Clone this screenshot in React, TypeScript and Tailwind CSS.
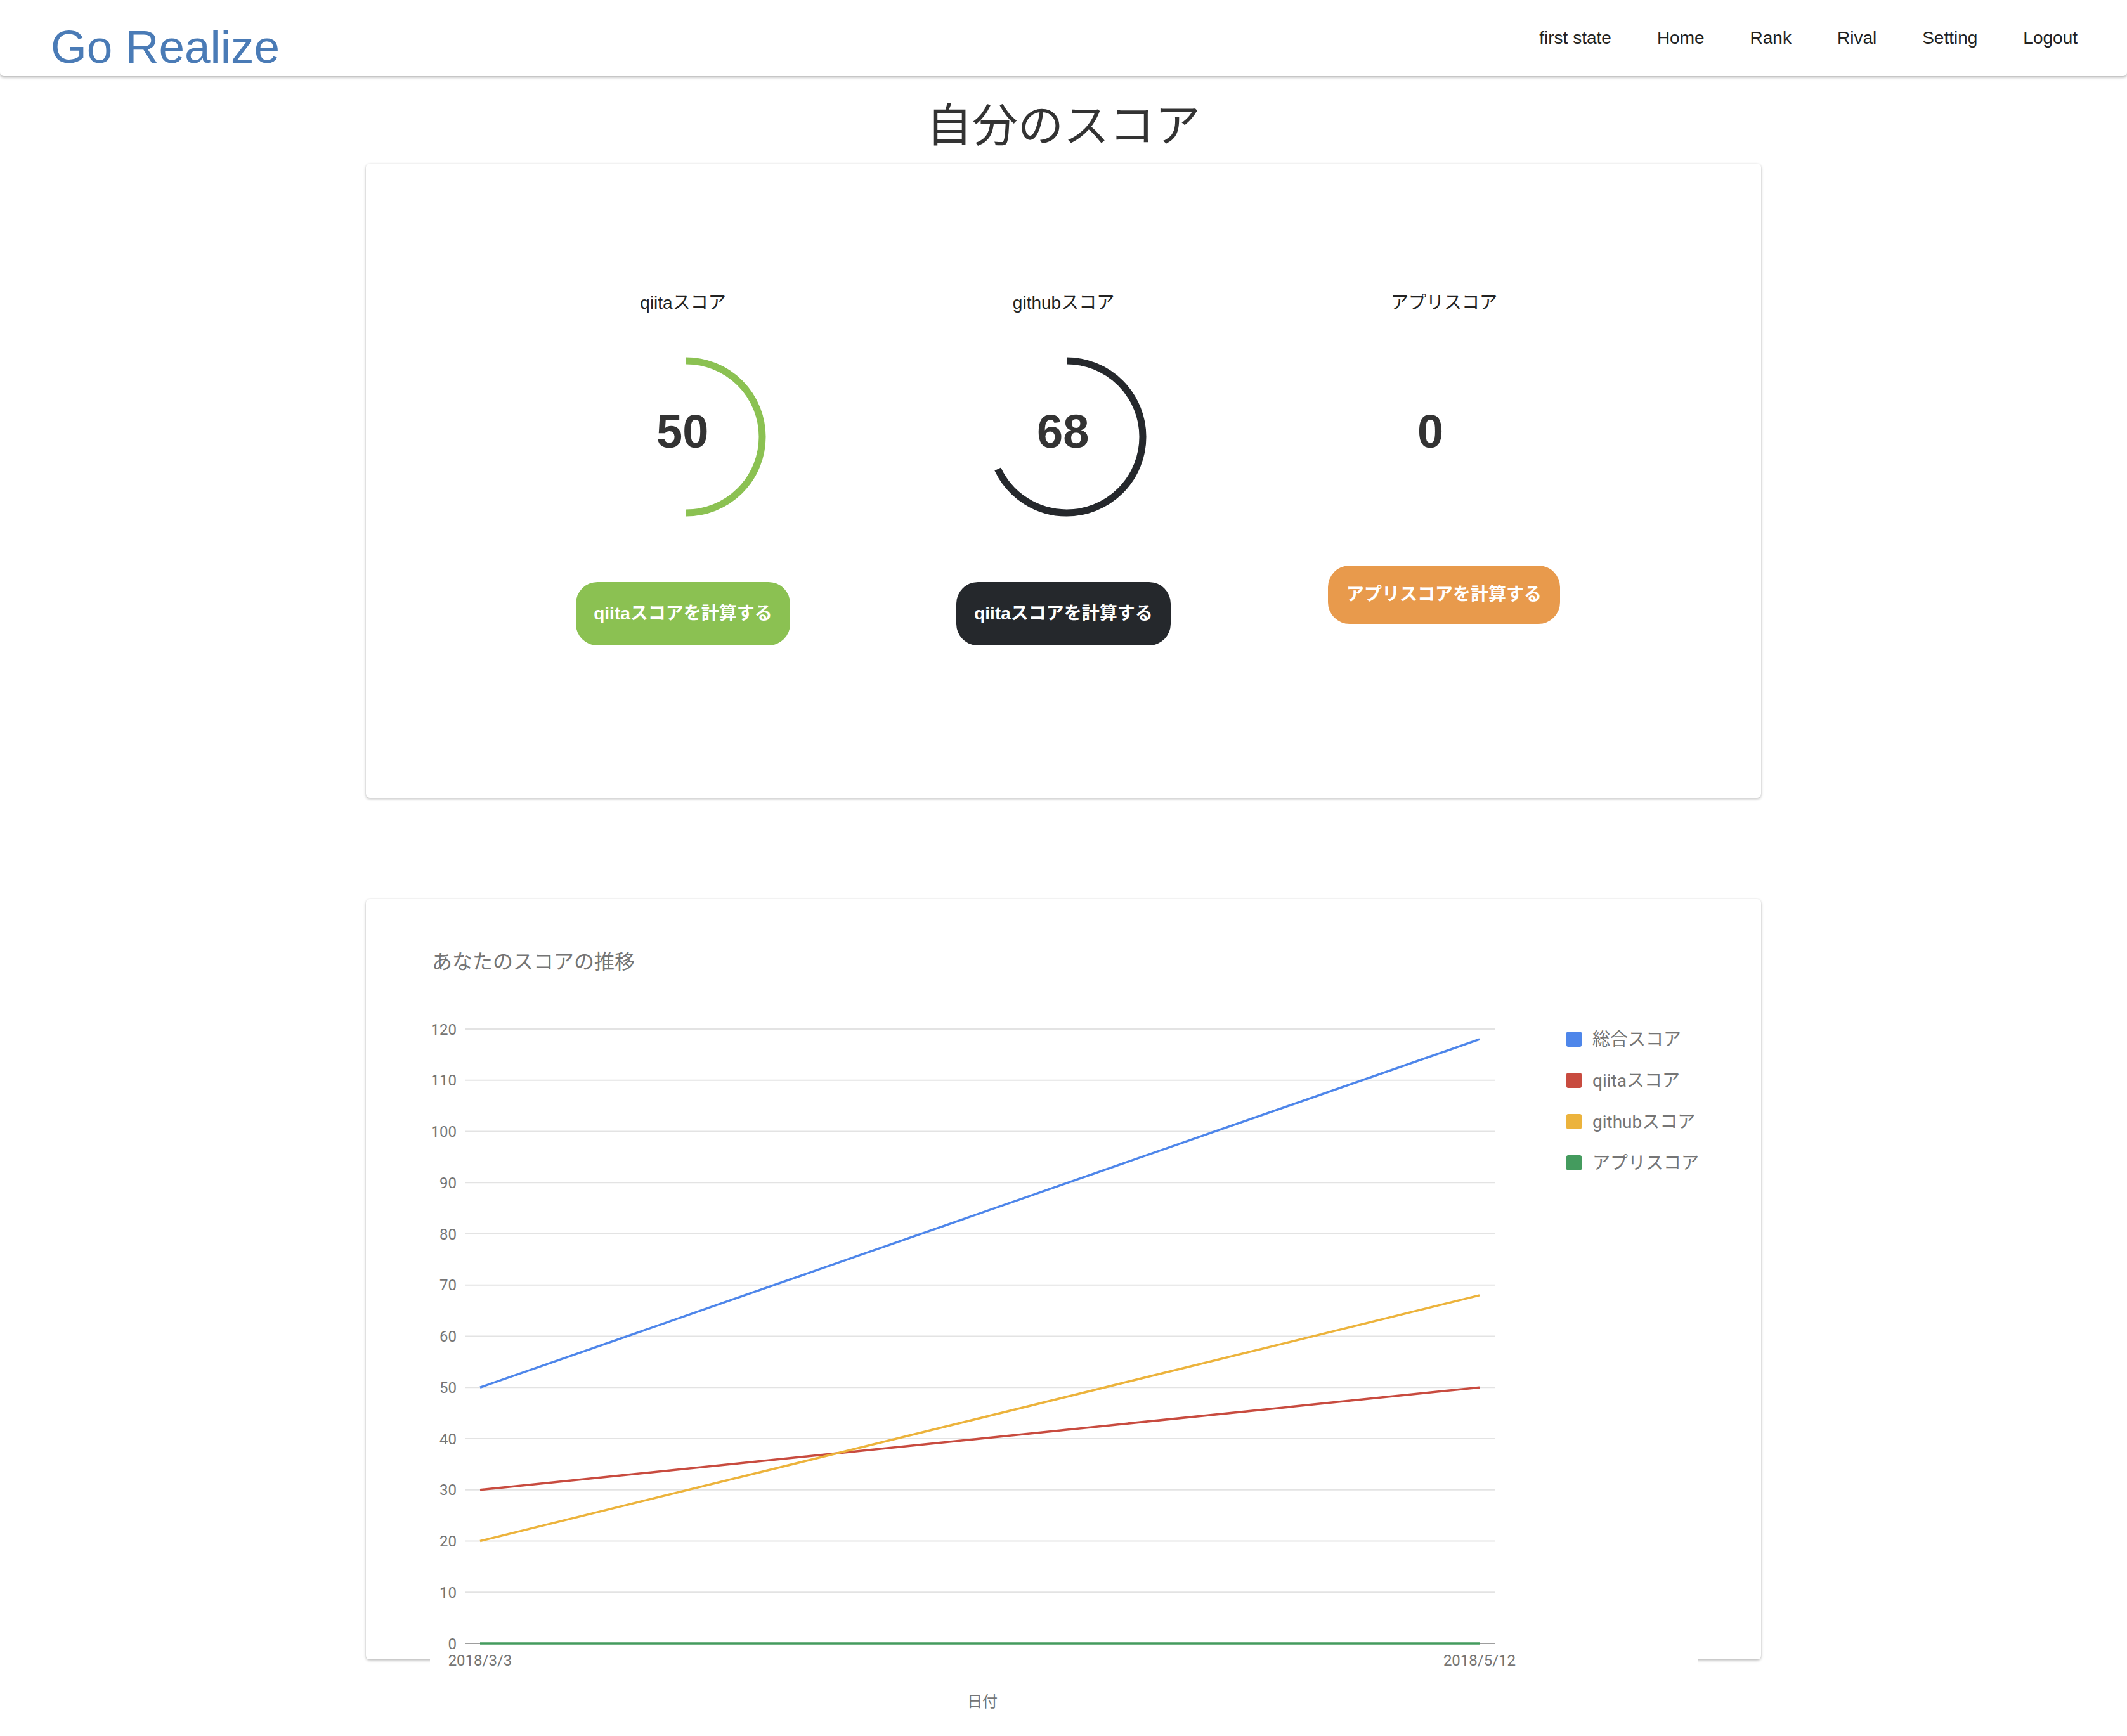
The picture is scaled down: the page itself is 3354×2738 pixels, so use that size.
import React from 'react';

const scores = [
  { label: 'qiitaスコア', value: 50, color: '#8bc152', button: 'qiitaスコアを計算する', btnClass: 'mt-[99px] h-[100px] w-[338px] bg-[#8bc152]' },
  { label: 'githubスコア', value: 68, color: '#25282c', button: 'qiitaスコアを計算する', btnClass: 'mt-[99px] h-[100px] w-[338px] bg-[#25282c]' },
  { label: 'アプリスコア', value: 0, color: '#e89a4c', button: 'アプリスコアを計算する', btnClass: 'mt-[73px] h-[92px] w-[366px] bg-[#e89a4c]' },
];

const navItems = ['first state', 'Home', 'Rank', 'Rival', 'Setting', 'Logout'];

const series = [
  { name: '総合スコア', color: '#4e86ea', from: 50, to: 118 },
  { name: 'qiitaスコア', color: '#c84b3f', from: 30, to: 50 },
  { name: 'githubスコア', color: '#ecb33c', from: 20, to: 68 },
  { name: 'アプリスコア', color: '#449b5e', from: 0, to: 0 },
];

const sansJa = "'Liberation Sans', 'Noto Sans CJK JP', sans-serif";
const chartFont = "Roboto, 'Noto Sans CJK JP', sans-serif";

function ScoreRing({ value, color }: { value: number; color: string }) {
  const r = 120;
  const c = 2 * Math.PI * r;
  return (
    <svg width="260" height="260" viewBox="0 0 260 260" className="block">
      <circle
        cx="130"
        cy="130"
        r={r}
        fill="none"
        stroke={color}
        strokeWidth="11"
        strokeDasharray={`${(value / 100) * c} ${c}`}
        transform="rotate(-90 130 130)"
      />
    </svg>
  );
}

function ScoreChart() {
  const y = (v: number) => 1152 - v * 8.075;
  const x0 = 79;
  const x1 = 1655;
  const ticks = [0, 10, 20, 30, 40, 50, 60, 70, 80, 90, 100, 110, 120];
  return (
    <svg width="2000" height="1298" viewBox="0 0 2000 1298" className="block" fontFamily={chartFont}>
      <rect x="0" y="0" width="2000" height="1298" fill="#ffffff" />
      <text x="3" y="88" fontSize="32" fill="#757575">
        あなたのスコアの推移
      </text>
      {ticks.map((t) => (
        <g key={t}>
          {t > 0 && <line x1="56" x2="1679" y1={y(t)} y2={y(t)} stroke="#e3e3e3" strokeWidth="2" />}
          <text x="42" y={y(t) + 8.5} fontSize="24" fill="#757575" textAnchor="end">
            {t}
          </text>
        </g>
      ))}
      <line x1="56" x2="1679" y1={y(0)} y2={y(0)} stroke="#9e9e9e" strokeWidth="2" />
      {series.map((s) => (
        <line key={s.name} x1={x0} x2={x1} y1={y(s.from)} y2={y(s.to)} stroke={s.color} strokeWidth="3.5" />
      ))}
      <text x={x0} y="1187" fontSize="24" fill="#757575" textAnchor="middle">
        2018/3/3
      </text>
      <text x={x1} y="1187" fontSize="24" fill="#757575" textAnchor="middle">
        2018/5/12
      </text>
      <text x="871" y="1252" fontSize="24" fill="#757575" textAnchor="middle">
        日付
      </text>
      {series.map((s, i) => (
        <g key={s.name}>
          <rect x="1792" y={187 + i * 65} width="24" height="24" rx="3" fill={s.color} />
          <text x="1833" y={209 + i * 65} fontSize="28" fill="#757575">
            {s.name}
          </text>
        </g>
      ))}
    </svg>
  );
}

export default function App() {
  return (
    <div className="min-h-screen bg-white" style={{ fontFamily: sansJa }}>
      <header className="flex h-[120px] items-start justify-between rounded-b-[6px] bg-white shadow-[0_2px_4px_rgba(0,0,0,0.3)]">
        <a className="ml-[80px] mt-[37px] text-[73px] leading-none text-[#4a7bb6]">Go Realize</a>
        <nav className="mr-[78px] mt-[46px] flex gap-[72px] text-[28px] leading-none text-[#222]">
          {navItems.map((item) => (
            <a key={item}>{item}</a>
          ))}
        </nav>
      </header>

      <main className="flex flex-col items-center">
        <h1 className="mt-[42px] text-[72px] font-normal leading-none text-[#333]">自分のスコア</h1>

        <section className="mt-[24px] h-[1000px] w-[2200px] rounded-[6px] bg-white shadow-[0_2px_4px_rgba(0,0,0,0.25),0_0_2px_rgba(0,0,0,0.08)]">
          <div className="mx-auto grid w-[1800px] grid-cols-3 pt-[206px]">
            {scores.map((s) => (
              <div key={s.label} className="flex flex-col items-center">
                <p className="text-[28px] leading-none text-[#222]">{s.label}</p>
                <div className="relative ml-[10px] mt-[67px] h-[260px] w-[260px]">
                  <ScoreRing value={s.value} color={s.color} />
                  <span className="absolute left-[83px] top-[85px] text-[74px] font-bold leading-none text-[#333]">
                    {s.value}
                  </span>
                </div>
                <button className={`${s.btnClass} rounded-[34px] text-[28px] font-bold leading-none text-white`}>
                  {s.button}
                </button>
              </div>
            ))}
          </div>
        </section>

        <section className="mt-[160px] h-[1199px] w-[2200px] rounded-[6px] bg-white pl-[101px] pt-[22px] shadow-[0_2px_4px_rgba(0,0,0,0.25),0_0_2px_rgba(0,0,0,0.08)]">
          <ScoreChart />
        </section>
      </main>
    </div>
  );
}
